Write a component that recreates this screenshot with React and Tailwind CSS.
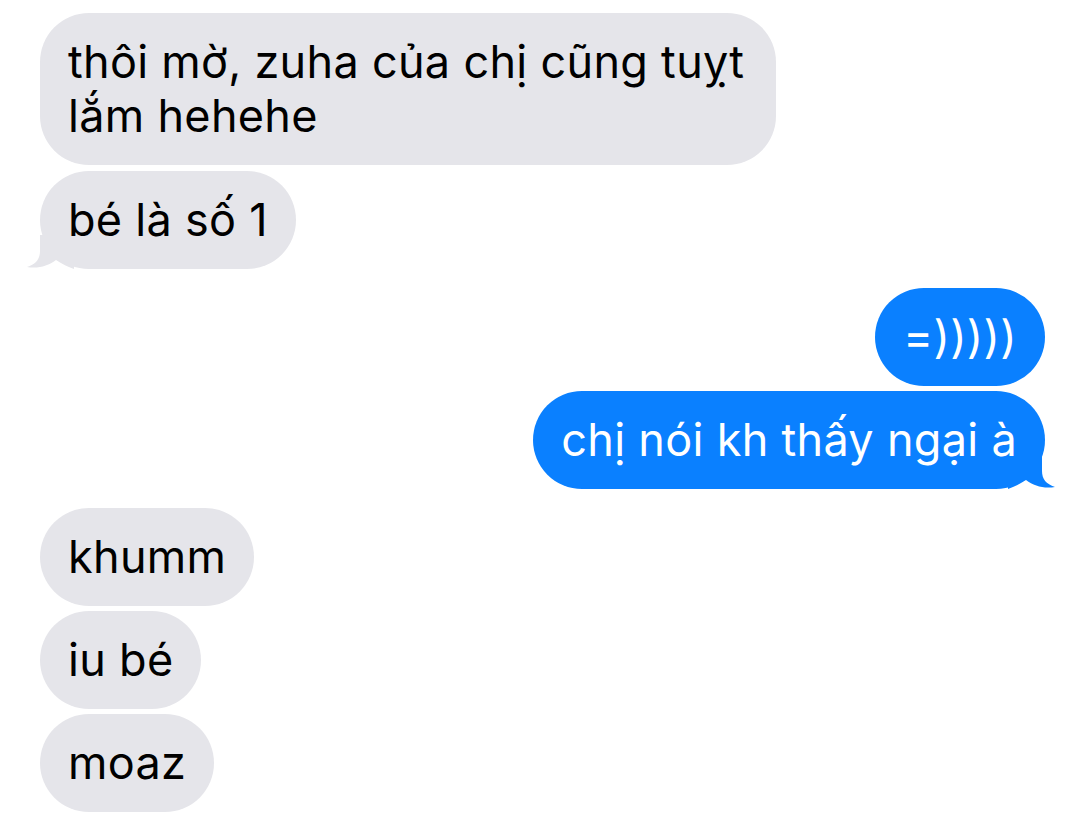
const font = { fontFamily: "Inter, 'Noto Sans', sans-serif" };

function TailLeft() {
  return (
    <svg
      className="absolute left-[-14px] bottom-0"
      width="48"
      height="34"
      viewBox="0 0 48 34"
      fill="#e5e5ea"
    >
      <path d="M14 0 L14 16 C14 24 10 29 1 32 C12 34 22 31 30 25 C36 29 42 32 48 34 L48 0 Z" />
    </svg>
  );
}

function TailRight() {
  return (
    <svg
      className="absolute right-[-11px] bottom-0"
      width="48"
      height="34"
      viewBox="0 0 48 34"
      fill="#0a80ff"
    >
      <path d="M34 0 L34 16 C34 24 38 29 47 32 C36 34 26 31 18 25 C12 29 6 32 0 34 L0 0 Z" />
    </svg>
  );
}

function Gray({ children, tail, className = "" }) {
  return (
    <div
      className={`relative self-start bg-[#e5e5ea] text-black rounded-[49px] px-[28px] py-[22px] ${className}`}
    >
      {tail && <TailLeft />}
      <span className="relative">{children}</span>
    </div>
  );
}

function Blue({ children, tail, className = "" }) {
  return (
    <div
      className={`relative self-end bg-[#0a80ff] text-white rounded-[49px] px-[28px] py-[22px] ${className}`}
    >
      {tail && <TailRight />}
      <span className="relative">{children}</span>
    </div>
  );
}

export default function App() {
  return (
    <div
      className="w-[1080px] h-[813px] bg-white overflow-hidden pl-[40px] pr-[35px] pt-[13px] flex flex-col text-[45px] leading-[54px] tracking-[0.3px]"
      style={font}
    >
      <Gray className="w-[736px]">thôi mờ, zuha của chị cũng tuỵt lắm hehehe</Gray>
      <Gray tail className="mt-[6px]">bé là số 1</Gray>

      <Blue className="mt-[19px]">=)))))</Blue>
      <Blue tail className="mt-[5px]">chị nói kh thấy ngại à</Blue>

      <Gray className="mt-[19px]">khumm</Gray>
      <Gray className="mt-[5px]">iu bé</Gray>
      <Gray className="mt-[5px]">moaz</Gray>
    </div>
  );
}
